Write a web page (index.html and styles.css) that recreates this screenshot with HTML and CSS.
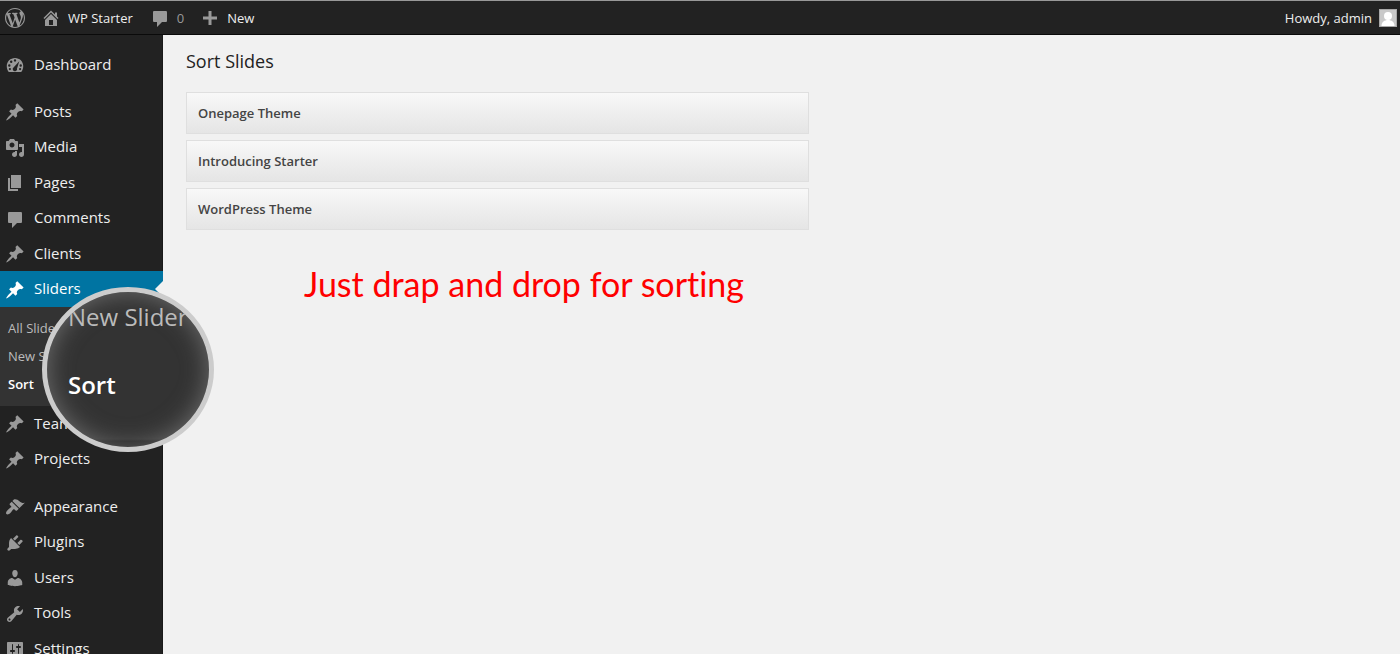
FILE: index.html
```html
<!DOCTYPE html>
<html lang="en">
<head>
<meta charset="utf-8">
<title>Sort Slides</title>
<link rel="stylesheet" href="styles.css">
</head>
<body>
<svg class="sprite" aria-hidden="true">
  <symbol id="i-wp" viewBox="0 0 20 20"><path d="M20 10c0-5.51-4.49-10-10-10C4.48 0 0 4.49 0 10c0 5.52 4.48 10 10 10 5.51 0 10-4.48 10-10zM7.78 15.37L4.37 6.22c.55-.02 1.17-.08 1.17-.08.5-.06.44-1.13-.06-1.11 0 0-1.45.11-2.37.11-.18 0-.37 0-.58-.01C4.12 2.69 6.87 1.11 10 1.11c2.33 0 4.45.87 6.05 2.34-.68-.11-1.65.39-1.65 1.58 0 .74.45 1.36.9 2.1.35.61.55 1.36.55 2.46 0 1.49-1.4 5-1.4 5l-3.03-8.37c.54-.02.82-.17.82-.17.5-.05.44-1.25-.06-1.22 0 0-1.44.12-2.38.12-.87 0-2.33-.12-2.33-.12-.5-.03-.56 1.2-.06 1.22l.92.08 1.26 3.41zM17.41 10c.24-.64.74-1.87.43-4.25.7 1.29 1.05 2.71 1.05 4.25 0 3.29-1.73 6.24-4.4 7.78.97-2.59 1.94-5.2 2.92-7.78zM6.1 18.09C3.12 16.65 1.11 13.53 1.11 10c0-1.3.23-2.48.72-3.59C3.25 10.3 4.67 14.2 6.1 18.09zm4.03-6.63l2.58 6.98c-.86.29-1.76.45-2.71.45-.79 0-1.57-.11-2.29-.33.81-2.38 1.62-4.74 2.42-7.1z"/></symbol>
  <symbol id="i-home" viewBox="0 0 20 20"><path d="M16 8.5l1.53 1.53-1.06 1.06L10 4.6l-6.47 6.49-1.06-1.06L10 2.5l4 4v-2h2v4zm-6-2.46l6 5.99V18H4v-5.97zM12 17v-5H8v5h4z"/></symbol>
  <symbol id="i-comment" viewBox="0 0 20 20"><path d="M4.500 3h11c1.100 0 1.500.4 1.500 1.500v8c0 1.100-.4 1.500-1.500 1.500H12l-5 5v-5H4.500c-1.100 0-1.500-.4-1.500-1.500v-8C3 3.400 3.400 3 4.500 3z"/></symbol>
  <symbol id="i-plus" viewBox="0 0 20 20"><path d="M17 8.500v3h-5.500V17h-3v-5.500H3v-3h5.500V3h3v5.500z"/></symbol>
  <symbol id="i-dash" viewBox="0 0 20 20"><path fill-rule="evenodd" d="M3.760 17h12.480c1.340-1.630 2.010-3.760 2.010-6 0-4.410-3.690-8-8.250-8s-8.250 3.590-8.250 8c0 2.240.67 4.370 2.010 6zM10 4.200a1.200 1.200 0 1 1 0 2.400a1.200 1.200 0 1 1 0-2.400zM6.200 5.600a1.200 1.200 0 1 1 0 2.400a1.200 1.200 0 1 1 0-2.400zM4.300 9.300a1.200 1.200 0 1 1 0 2.400a1.200 1.200 0 1 1 0-2.400zM15.700 9.300a1.200 1.200 0 1 1 0 2.400a1.200 1.200 0 1 1 0-2.400zM4.900 13a1.100 1.100 0 1 1 0 2.200a1.100 1.100 0 1 1 0-2.200zM15.100 13a1.100 1.100 0 1 1 0 2.200a1.100 1.100 0 1 1 0-2.200zM14.300 6.200l-2.300 7.200a2.200 2.200 0 1 1-3.500-1z"/></symbol>
  <symbol id="i-pin" viewBox="0 0 20 20"><path d="M10.440 3.020l1.820-1.820 6.360 6.350-1.830 1.820c-1.050-.68-2.480-.57-3.410.36l-.75.75c-.92.930-1.040 2.350-.35 3.410l-1.830 1.820-2.410-2.410-2.800 2.790c-.42.420-3.380 2.710-3.800 2.290s1.860-3.390 2.280-3.810l2.790-2.790L4.100 9.360l1.830-1.820c1.050.69 2.480.57 3.400-.36l.75-.75c.93-.92 1.050-2.350.36-3.410z"/></symbol>
  <symbol id="i-media" viewBox="0 0 20 20"><path d="M13 11V4c0-.55-.45-1-1-1h-1.670L9 1H5L3.670 3H2c-.55 0-1 .45-1 1v7c0 .55.45 1 1 1h10c.55 0 1-.45 1-1zM7 4.500c1.380 0 2.500 1.120 2.500 2.500S8.380 9.500 7 9.500 4.500 8.380 4.500 7 5.620 4.500 7 4.500zM14 6h5v10.500c0 1.380-1.120 2.500-2.500 2.500S14 17.880 14 16.500s1.120-2.500 2.500-2.500c.17 0 .34.020.5.050V9h-3V6zm-4 8.050V13h2v3.500c0 1.380-1.120 2.500-2.500 2.500S7 17.880 7 16.500 8.120 14 9.500 14c.17 0 .34.020.5.050z"/></symbol>
  <symbol id="i-page" viewBox="0 0 20 20"><path d="M6 15V2h10v13H6zm-1 1h8v2H3V5h2v11z"/></symbol>
  <symbol id="i-brush" viewBox="0 0 20 20"><path d="M14.480 11.060L7.410 3.990l1.500-1.500c.5-.56 2.300-.47 3.510.32 1.210.8 1.430 1.280 2.910 2.100 1.180.64 2.450 1.260 4.450.85zm-.71.71L6.700 4.700 4.930 6.470c-.39.39-.39 1.020 0 1.410l1.060 1.060c.39.39.39 1.030 0 1.420-.6.600-1.430 1.110-2.210 1.690-.35.260-.7.530-1.010.84C1.430 14.230.4 16.080 1.400 17.070c.99 1 2.840-.03 4.180-1.360.31-.31.58-.66.85-1.020.57-.78 1.080-1.610 1.690-2.210.39-.39 1.020-.39 1.410 0l1.060 1.060c.39.39 1.020.39 1.410 0z"/></symbol>
  <symbol id="i-plug" viewBox="0 0 20 20"><path d="M13.110 4.360L9.870 7.600 8 5.730l3.240-3.240c.35-.34 1.050-.2 1.560.32.520.51.660 1.210.31 1.550zm-8 1.770l.91-1.120 9.010 9.010-1.190.84c-.71.710-2.630 1.160-3.820 1.160H6.140L4.900 17.260c-.59.590-1.540.590-2.120 0-.59-.58-.59-1.530 0-2.120l1.240-1.240v-3.880c0-1.130.4-3.190 1.090-3.890zm7.260 3.970l3.240-3.240c.34-.35 1.040-.21 1.550.31.520.51.660 1.210.31 1.550l-3.240 3.250z"/></symbol>
  <symbol id="i-user" viewBox="0 0 20 20"><path d="M10 9.250c-2.270 0-2.730-3.440-2.730-3.440C7 4.020 7.820 2 9.970 2c2.160 0 2.980 2.020 2.710 3.810 0 0-.41 3.440-2.680 3.440zm0 2.570L12.720 10c2.390 0 4.520 2.330 4.520 4.530v2.490s-3.650 1.130-7.240 1.130c-3.650 0-7.240-1.130-7.240-1.130v-2.490c0-2.250 1.940-4.480 4.470-4.480z"/></symbol>
  <symbol id="i-tool" viewBox="0 0 20 20"><path d="M16.680 9.770c-1.340 1.340-3.300 1.670-4.950.99l-5.410 6.520c-.99.990-2.590.990-3.580 0s-.99-2.590 0-3.570l6.520-5.420c-.68-1.650-.35-3.610.99-4.950 1.280-1.280 3.120-1.620 4.720-1.060l-2.890 2.890 2.820 2.820 2.860-2.870c.53 1.580.18 3.390-1.080 4.650zM3.810 16.210c.4.390 1.040.390 1.430 0 .4-.4.4-1.040 0-1.430-.39-.4-1.030-.4-1.430 0-.39.390-.39 1.030 0 1.430z"/></symbol>
  <symbol id="i-settings" viewBox="0 0 20 20"><path d="M18 16V4c0-.55-.45-1-1-1H3c-.55 0-1 .45-1 1v12c0 .55.45 1 1 1h14c.55 0 1-.45 1-1zM8 11h1c.55 0 1 .45 1 1s-.45 1-1 1H8v1.500c0 .28-.22.500-.5.500s-.5-.22-.5-.5V13H6c-.55 0-1-.45-1-1s.45-1 1-1h1V5.500c0-.28.22-.5.500-.5s.5.220.5.500V11zm5-2h-1c-.55 0-1-.45-1-1s.45-1 1-1h1V5.500c0-.28.22-.5.500-.5s.5.220.5.500V7h1c.55 0 1 .45 1 1s-.45 1-1 1h-1v5.500c0 .28-.22.500-.5.500s-.5-.22-.5-.5V9z"/></symbol>
</svg>

<header class="adminbar">
  <a class="bar-item" href="#" aria-label="About WordPress"><svg class="icon"><use href="#i-wp"/></svg></a>
  <a class="bar-item bar-site" href="#"><svg class="icon"><use href="#i-home"/></svg><span>WP Starter</span></a>
  <a class="bar-item bar-comments" href="#"><svg class="icon"><use href="#i-comment"/></svg><span>0</span></a>
  <a class="bar-item bar-new" href="#"><svg class="icon"><use href="#i-plus"/></svg><span>New</span></a>
  <a class="bar-item bar-account" href="#"><span>Howdy, admin</span>
    <svg class="avatar" viewBox="0 0 18 18"><rect width="18" height="18" fill="#a8a8a8"/><rect x="1" y="1" width="16" height="16" fill="#c9c9c9"/><circle cx="9" cy="7" r="4" fill="#fff"/><path d="M2.500 17c0-4 3-6 6.500-6s6.500 2 6.500 6z" fill="#fff"/></svg>
  </a>
</header>

<div class="shell">
  <nav class="sidebar">
    <ul class="menu">
      <li><a class="menu-link" href="#"><svg class="icon"><use href="#i-dash"/></svg>Dashboard</a></li>
    </ul>
    <ul class="menu">
      <li><a class="menu-link" href="#"><svg class="icon"><use href="#i-pin"/></svg>Posts</a></li>
      <li><a class="menu-link" href="#"><svg class="icon"><use href="#i-media"/></svg>Media</a></li>
      <li><a class="menu-link" href="#"><svg class="icon"><use href="#i-page"/></svg>Pages</a></li>
      <li><a class="menu-link" href="#"><svg class="icon"><use href="#i-comment"/></svg>Comments</a></li>
      <li><a class="menu-link" href="#"><svg class="icon"><use href="#i-pin"/></svg>Clients</a></li>
      <li class="current">
        <a class="menu-link" href="#"><svg class="icon"><use href="#i-pin"/></svg>Sliders</a>
        <ul class="submenu">
          <li><a href="#">All Sliders</a></li>
          <li><a href="#">New Slider</a></li>
          <li><a class="active" href="#">Sort</a></li>
        </ul>
        <div class="lens" aria-hidden="true">
          <span class="lens-item">New Slider</span>
          <span class="lens-item lens-active">Sort</span>
        </div>
      </li>
      <li><a class="menu-link" href="#"><svg class="icon"><use href="#i-pin"/></svg>Team</a></li>
      <li><a class="menu-link" href="#"><svg class="icon"><use href="#i-pin"/></svg>Projects</a></li>
    </ul>
    <ul class="menu">
      <li><a class="menu-link" href="#"><svg class="icon"><use href="#i-brush"/></svg>Appearance</a></li>
      <li><a class="menu-link" href="#"><svg class="icon"><use href="#i-plug"/></svg>Plugins</a></li>
      <li><a class="menu-link" href="#"><svg class="icon"><use href="#i-user"/></svg>Users</a></li>
      <li><a class="menu-link" href="#"><svg class="icon"><use href="#i-tool"/></svg>Tools</a></li>
      <li><a class="menu-link" href="#"><svg class="icon"><use href="#i-settings"/></svg>Settings</a></li>
    </ul>
  </nav>
  <main class="content">
    <h1 class="title">Sort Slides</h1>
    <ul class="slides">
      <li class="slide">Onepage Theme</li>
      <li class="slide">Introducing Starter</li>
      <li class="slide">WordPress Theme</li>
    </ul>
    <p class="note">Just drap and drop for sorting</p>
  </main>
</div>
</body>
</html>
```
FILE: styles.css
```css
* { box-sizing: border-box; }
body {
  margin: 0;
  height: 100vh;
  overflow: hidden;
  display: flex;
  flex-direction: column;
  background: #f1f1f1;
  font-family: "Open Sans", "Noto Sans", sans-serif;
  color: #222;
}
ul { list-style: none; margin: 0; padding: 0; }
a { color: inherit; text-decoration: none; }
.sprite { position: absolute; width: 0; height: 0; }
.icon { width: 20px; height: 20px; flex: none; fill: #999; }

.adminbar {
  flex: none;
  display: flex;
  align-items: center;
  height: 35px;
  padding: 0 3px 0 5px;
  background: #222;
  border-top: 1px solid #999;
  border-bottom: 1px solid #0a0a0a;
  color: #eee;
  font-size: 13px;
  font-weight: 500;
}
.bar-item { display: flex; align-items: center; gap: 7px; }
.bar-site { margin-left: 16px; }
.bar-comments { margin-left: 17px; color: #999; }
.bar-new { margin-left: 16px; }
.bar-account { margin-left: auto; }
.avatar { width: 18px; height: 18px; }

.shell { flex: 1; min-height: 0; display: flex; }
.sidebar {
  flex: none;
  width: 163px;
  padding-top: 12px;
  background: #222;
  border-right: 1px solid #1a1a1a;
}
.menu { margin-bottom: 12px; }
.menu-link {
  display: flex;
  align-items: center;
  gap: 9px;
  height: 35px;
  padding: 0 0 2px 5px;
  color: #eee;
  font-size: 15px;
}
.menu-link .icon { margin-top: 3px; }
.menu > li:nth-child(even) > .menu-link { height: 36px; }
.current { position: relative; }
.current > .menu-link { background: #0074a2; color: #fff; margin-right: -1px; }
.current > .menu-link .icon { fill: #fff; }
.current > .menu-link::after {
  content: "";
  position: absolute;
  top: 10px;
  right: -1px;
  border: 8px solid transparent;
  border-left: 0;
  border-right-color: #f1f1f1;
}
.submenu { padding: 7px 0 8px; background: #333; }
.submenu a {
  display: block;
  padding-left: 8px;
  font-size: 13px;
  line-height: 28px;
  color: #bbb;
}
.submenu .active { color: #fff; font-weight: 600; }

.lens {
  position: absolute;
  z-index: 2;
  top: 16px;
  left: 42px;
  width: 172px;
  height: 165px;
  padding: 8px 0 0 21px;
  overflow: hidden;
  border: 5px solid #ccc;
  border-radius: 50%;
  background: linear-gradient(#333 147px, #222 149px);
  box-shadow: inset 0 0 24px rgba(150, 150, 150, .6);
  font-size: 24px;
  line-height: 34px;
  white-space: nowrap;
  color: #bbb;
}
.lens-item { display: block; margin-bottom: 34px; }
.lens-active { color: #fff; font-weight: 600; }

.content { flex: 1; min-width: 0; padding: 14px 23px; }
.title { margin: 0 0 18px; font-size: 18px; line-height: 25px; font-weight: 500; }
.slides { display: flex; flex-direction: column; gap: 6px; max-width: 623px; }
.slide {
  padding: 10px 11px;
  border: 1px solid #dfdfdf;
  background: linear-gradient(#f8f8f8, #e5e5e5);
  font-size: 13px;
  line-height: 20px;
  font-weight: 600;
  color: #444;
}
.note {
  margin: 30px 0 0;
  padding-left: 118px;
  font-family: Lato, sans-serif;
  font-size: 34px;
  line-height: 48px;
  font-variant-ligatures: none;
  color: #f00;
}
```
